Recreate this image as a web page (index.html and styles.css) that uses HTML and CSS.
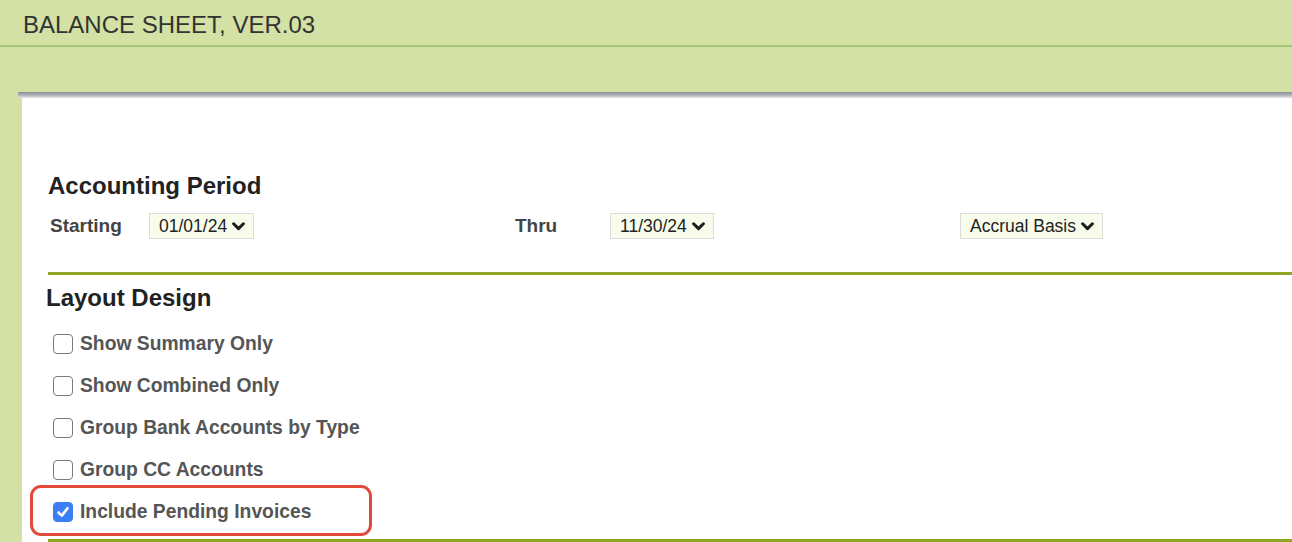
FILE: index.html
```html
<!DOCTYPE html>
<html lang="en">
<head>
    <meta charset="UTF-8">
    <title>Balance Sheet, Ver.03</title>
    <link rel="stylesheet" href="styles.css">
</head>
<body>
    <header class="page-header">
        <h1>BALANCE SHEET, VER.03</h1>
    </header>

    <div class="toolbar"></div>

    <div class="panel-edge"></div>
    <main class="panel">
        <section class="section">
            <h2 class="section-title">Accounting Period</h2>
            <div class="period-row">
                <span class="field-label">Starting</span>
                <span class="select">01/01/24
                    <svg class="chevron" viewBox="0 0 12 8"><path d="M1.5 1.5 L6 6 L10.5 1.5" /></svg>
                </span>
                <span class="field-label">Thru</span>
                <span class="select">11/30/24
                    <svg class="chevron" viewBox="0 0 12 8"><path d="M1.5 1.5 L6 6 L10.5 1.5" /></svg>
                </span>
                <span class="select">Accrual Basis
                    <svg class="chevron" viewBox="0 0 12 8"><path d="M1.5 1.5 L6 6 L10.5 1.5" /></svg>
                </span>
            </div>
        </section>

        <div class="divider"></div>

        <section class="section">
            <h2 class="section-title layout-title">Layout Design</h2>
            <ul class="options">
                <li class="option">
                    <span class="checkbox"></span>
                    <span class="option-label">Show Summary Only</span>
                </li>
                <li class="option">
                    <span class="checkbox"></span>
                    <span class="option-label">Show Combined Only</span>
                </li>
                <li class="option">
                    <span class="checkbox"></span>
                    <span class="option-label">Group Bank Accounts by Type</span>
                </li>
                <li class="option">
                    <span class="checkbox"></span>
                    <span class="option-label">Group CC Accounts</span>
                </li>
                <li class="option option-highlight">
                    <span class="checkbox checked">
                        <svg viewBox="0 0 18 18"><path d="M4.5 9.5 L7.8 12.6 L13.5 5.2" /></svg>
                    </span>
                    <span class="option-label">Include Pending Invoices</span>
                </li>
            </ul>
        </section>

        <div class="divider"></div>
    </main>
</body>
</html>
```

FILE: styles.css
```css
:root {
    --page-green: #d3e1a5;
    --header-line: #a2c97b;
    --olive: #8fa624;
    --text-dark: #2e2e2e;
    --text-label: #444;
    --text-option: #555;
    --highlight: #e2493a;
}

*,
*::before,
*::after {
    margin: 0;
    padding: 0;
    box-sizing: border-box;
}

body {
    font-family: "Liberation Sans", Arial, sans-serif;
    background-color: var(--page-green);
    color: var(--text-dark);
    overflow: hidden;
}

.page-header {
    height: 47px;
    padding-left: 23px;
    border-bottom: 2px solid var(--header-line);
}

.page-header h1 {
    font-size: 24px;
    font-weight: normal;
    line-height: 28px;
    padding-top: 11px;
    color: #333;
}

.toolbar {
    height: 45px;
}

.panel-edge {
    margin-left: 18px;
    height: 6px;
    background: linear-gradient(#8d8d96, #a8a8b0 40%, #e4e4e8);
}

.panel {
    margin-left: 22px;
    background-color: #fff;
    padding-left: 26px;
    height: 460px;
}

.section-title {
    font-size: 24px;
    font-weight: bold;
    line-height: 28px;
    color: #222;
}

.section:first-child {
    padding-top: 74px;
}

.period-row {
    display: grid;
    grid-template-columns: 101px 364px 97px 350px auto;
    align-items: center;
    margin-top: 13px;
    height: 26px;
    justify-items: start;
}

.field-label {
    font-size: 19px;
    font-weight: bold;
    color: var(--text-label);
    padding-left: 2px;
}

.select {
    display: inline-flex;
    align-items: center;
    gap: 5px;
    height: 26px;
    padding: 0 8px 0 9px;
    background-color: #f7fdea;
    border: 1px solid #dcdcdc;
    font-size: 17.5px;
    color: #222;
}

.chevron {
    width: 13px;
    height: 9px;
    fill: none;
    stroke: #1e1e1e;
    stroke-width: 2.8;
    stroke-linecap: round;
    stroke-linejoin: round;
}

.divider {
    border-top: 3px solid var(--olive);
    margin-top: 33px;
}

.layout-title {
    margin-top: 9px;
    margin-left: -2px;
}

.options {
    list-style: none;
    margin-top: 11px;
    padding-left: 5px;
}

.option {
    display: flex;
    align-items: center;
    gap: 7px;
    height: 42px;
}

.checkbox {
    width: 20px;
    height: 20px;
    border: 1.5px solid #7a7a7a;
    border-radius: 4px;
    background-color: #fff;
    display: flex;
    align-items: center;
    justify-content: center;
}

.checkbox.checked {
    background-color: #3a7ff6;
    border-color: #3a7ff6;
}

.checkbox svg {
    width: 18px;
    height: 18px;
    fill: none;
    stroke: #fff;
    stroke-width: 2.6;
    stroke-linecap: round;
    stroke-linejoin: round;
}

.option-label {
    font-size: 19.3px;
    font-weight: bold;
    color: var(--text-option);
}

/* red annotation box around the pending invoices option */
.option-highlight {
    position: relative;
}

.option-highlight::after {
    content: "";
    position: absolute;
    left: -23px;
    top: -6px;
    width: 342px;
    height: 51px;
    border: 3px solid var(--highlight);
    border-radius: 11px;
}

.options + .divider,
.section + .divider:last-child {
    margin-top: 6px;
}
```
